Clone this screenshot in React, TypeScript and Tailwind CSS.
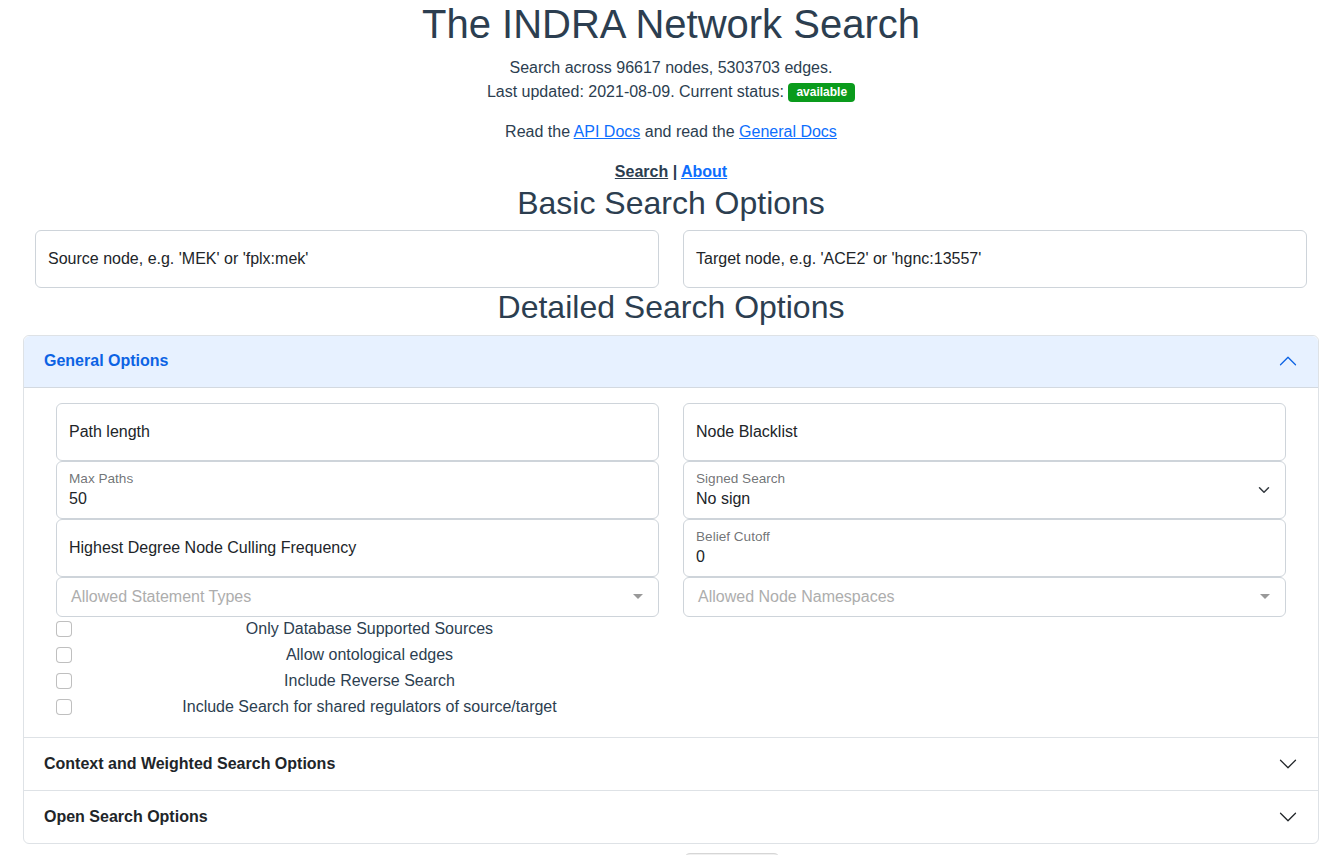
import React from "react";

const Chevron = ({ up, className }: { up?: boolean; className?: string }) => (
  <svg
    viewBox="0 0 16 16"
    className={className}
    fill="currentColor"
    style={up ? { transform: "rotate(-180deg)" } : undefined}
  >
    <path
      fillRule="evenodd"
      d="M1.646 4.646a.5.5 0 0 1 .708 0L8 10.293l5.646-5.647a.5.5 0 0 1 .708.708l-6 6a.5.5 0 0 1-.708 0l-6-6a.5.5 0 0 1 0-.708z"
    />
  </svg>
);

function PlainField({ label }: { label: string }) {
  return (
    <div className="flex h-[58px] items-center rounded-md border border-[#ced4da] bg-white px-3 text-base text-[#212529]">
      {label}
    </div>
  );
}

function FloatField({ label, value, select }: { label: string; value: string; select?: boolean }) {
  return (
    <div className="flex h-[58px] items-center rounded-md border border-[#ced4da] bg-white pl-3 pr-[13px]">
      <div className="flex flex-1 flex-col">
        <span className="text-[13.6px] leading-4 text-[#212529]/65">{label}</span>
        <span className="mt-[2px] text-base leading-5 text-[#212529]">{value}</span>
      </div>
      {select && (
        <svg viewBox="0 0 16 16" className="h-3 w-4" fill="none">
          <path d="m2 5 6 6 6-6" stroke="#343a40" strokeWidth="2" strokeLinecap="round" strokeLinejoin="round" />
        </svg>
      )}
    </div>
  );
}

function MultiSelect({ placeholder }: { placeholder: string }) {
  return (
    <div className="flex h-10 items-center justify-between rounded-md border border-[#ced4da] bg-white pl-[14px] pr-[15px]">
      <span className="text-base text-[#adadad]">{placeholder}</span>
      <span className="h-0 w-0 border-x-[5px] border-t-[5px] border-x-transparent border-t-[#999]" />
    </div>
  );
}

function Check({ label }: { label: string }) {
  return (
    <div className="flex h-[26px] items-start">
      <span className="mt-1 h-4 w-4 rounded-[4px] border border-black/25 bg-white" />
      <span className="ml-2 flex-1 text-center text-base leading-6 text-[#2c3e50]">{label}</span>
    </div>
  );
}

const checks = [
  "Only Database Supported Sources",
  "Allow ontological edges",
  "Include Reverse Search",
  "Include Search for shared regulators of source/target",
];

export default function App() {
  return (
    <div className="min-h-screen bg-white font-['Liberation_Sans',Arial,sans-serif] text-[#2c3e50]">
      <div className="mx-auto max-w-[1320px] px-3">
        <h1 className="mb-2 text-center text-[40px] leading-[48px]">The INDRA Network Search</h1>
        <p className="mb-4 text-center text-base leading-6">
          Search across 96617 nodes, 5303703 edges.
          <br />
          Last updated: 2021-08-09. Current status:{" "}
          <span className="inline-block rounded-[4px] bg-[#0a9b1c] px-2 py-[3px] align-[1px] text-xs font-bold leading-[13px] text-white">
            available
          </span>
        </p>
        <p className="mb-4 text-center text-base leading-6">
          Read the <a className="text-[#0d6efd] underline">API Docs</a> and read the{" "}
          <a className="text-[#0d6efd] underline">General Docs</a>
        </p>
        <div className="text-center text-base font-bold leading-6">
          <a className="underline">Search</a> | <a className="text-[#0d6efd] underline">About</a>
        </div>
        <h2 className="mb-2 text-center text-[32px] leading-[38.4px]">Basic Search Options</h2>
        <div className="grid grid-cols-2 gap-6 px-3">
          <PlainField label="Source node, e.g. 'MEK' or 'fplx:mek'" />
          <PlainField label="Target node, e.g. 'ACE2' or 'hgnc:13557'" />
        </div>
        <h2 className="mb-2 text-center text-[32px] leading-[38.4px]">Detailed Search Options</h2>

        <div className="rounded-md border border-[#dee2e6]">
          <div className="flex h-[52px] items-center justify-between rounded-t-md border-b border-[#d3d9e0] bg-[#e7f1ff] px-5">
            <span className="text-base font-bold text-[#0c63e4]">General Options</span>
            <Chevron up className="h-5 w-5 text-[#0c63e4]" />
          </div>
          <div className="grid grid-cols-2 gap-6 px-8 pb-4 pt-[15px]">
            <div className="flex flex-col">
              <PlainField label="Path length" />
              <FloatField label="Max Paths" value="50" />
              <PlainField label="Highest Degree Node Culling Frequency" />
              <MultiSelect placeholder="Allowed Statement Types" />
              {checks.map((c) => (
                <Check key={c} label={c} />
              ))}
            </div>
            <div className="flex flex-col">
              <PlainField label="Node Blacklist" />
              <FloatField label="Signed Search" value="No sign" select />
              <FloatField label="Belief Cutoff" value="0" />
              <MultiSelect placeholder="Allowed Node Namespaces" />
            </div>
          </div>
          <div className="flex h-[53px] items-center justify-between border-t border-[#dee2e6] px-5">
            <span className="text-base font-bold text-[#212529]">Context and Weighted Search Options</span>
            <Chevron className="h-5 w-5 text-[#212529]" />
          </div>
          <div className="flex h-[53px] items-center justify-between border-t border-[#dee2e6] px-5">
            <span className="text-base font-bold text-[#212529]">Open Search Options</span>
            <Chevron className="h-5 w-5 text-[#212529]" />
          </div>
        </div>

        <div className="mt-[9px] flex justify-center pl-[122px]">
          <button
            aria-label="Submit search"
            className="h-[38px] w-[96px] rounded-md border border-[#d6d6d6] bg-[#f0f0f0]"
          />
        </div>
      </div>
    </div>
  );
}
